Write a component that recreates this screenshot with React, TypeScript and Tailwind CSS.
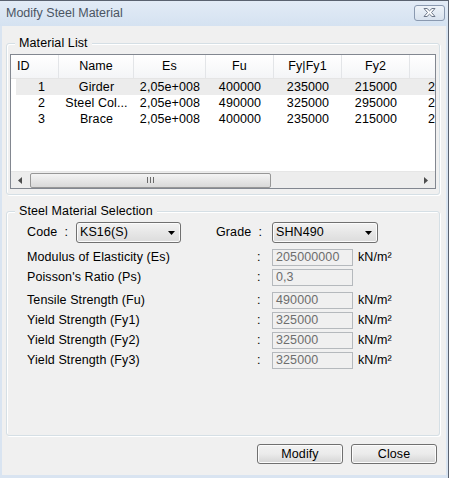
import React from "react";

const FONT = { fontFamily: '"Liberation Sans", Arial, sans-serif' };

const columns = [
  { title: "ID", w: 48 },
  { title: "Name", w: 75 },
  { title: "Es", w: 72 },
  { title: "Fu", w: 68 },
  { title: "Fy|Fy1", w: 68 },
  { title: "Fy2", w: 68 },
  { title: "Fy3", w: 74 },
];

const rows = [
  ["1", "Girder", "2,05e+008", "400000", "235000", "215000", "215000"],
  ["2", "Steel Col...", "2,05e+008", "490000", "325000", "295000", "295000"],
  ["3", "Brace", "2,05e+008", "400000", "235000", "215000", "215000"],
];

const props = [
  { label: "Modulus of Elasticity (Es)", value: "205000000", unit: true },
  { label: "Poisson's Ratio (Ps)", value: "0,3", unit: false },
  { label: "Tensile Strength (Fu)", value: "490000", unit: true, gap: true },
  { label: "Yield Strength (Fy1)", value: "325000", unit: true },
  { label: "Yield Strength (Fy2)", value: "325000", unit: true },
  { label: "Yield Strength (Fy3)", value: "325000", unit: true },
];

function DownArrow() {
  return (
    <svg width="7" height="4" viewBox="0 0 7 4">
      <path d="M0 0h7L3.5 4z" fill="#000" />
    </svg>
  );
}

function Combo({ value, width }: { value: string; width: string }) {
  return (
    <div
      className={`${width} h-[21px] flex items-center justify-between pl-[3px] pr-[5px] rounded-[3px] border border-[#707070] bg-gradient-to-b from-[#f2f2f2] to-[#dcdcdc] shadow-[inset_0_0_0_1px_#fbfbfb]`}
    >
      <span>{value}</span>
      <DownArrow />
    </div>
  );
}

function GroupBox({
  title,
  className,
  children,
}: {
  title: string;
  className: string;
  children: React.ReactNode;
}) {
  return (
    <div
      className={`relative border border-[#d5dfe5] rounded-[3px] shadow-[1px_1px_0_#ffffff,inset_1px_1px_0_#ffffff] ${className}`}
    >
      <span className="absolute left-[8px] top-[-8px] px-[4px] bg-[#f0f0f0] leading-[14px]">
        {title}
      </span>
      {children}
    </div>
  );
}

function Button({ label }: { label: string }) {
  return (
    <div className="w-[86px] h-[20px] flex items-center justify-center rounded-[3px] border border-[#707070] bg-gradient-to-b from-[#f2f2f2] via-[#ebebeb] to-[#d4d4d4] shadow-[inset_0_0_0_1px_#fcfcfc]">
      {label}
    </div>
  );
}

export default function App() {
  return (
    <div
      className="w-[449px] h-[478px] flex flex-col bg-[#d9e4f1] border-t border-r border-[#5a6270] text-[12.5px] tracking-[0.1px] text-black"
      style={FONT}
    >
      {/* Title bar */}
      <div className="h-[25px] flex items-center justify-between pl-[6px] pr-[3px] bg-gradient-to-b from-[#e2ebf6] to-[#d5e2f1]">
        <span className="text-[#4b5563] text-[12.5px] tracking-normal">Modify Steel Material</span>
        <div className="w-[31px] h-[16px] mt-[-2px] flex items-center justify-center rounded-[3px] border border-[#8a99b0] bg-gradient-to-b from-[#eef3f9] to-[#d8e2ee]">
          <svg width="13" height="9" viewBox="0 0 13 9">
            <path
              d="M1 0.5h3l2.5 2.3 2.5-2.3h3L8.5 4.5l3.5 4h-3L6.5 6.2 4 8.5H1l3.5-4z"
              fill="#ffffff"
              stroke="#6b7688"
              strokeWidth="1"
            />
          </svg>
        </div>
      </div>

      {/* Client area */}
      <div className="flex-1 ml-[2px] mr-[2px] mb-[3px] bg-[#f0f0f0] flex flex-col px-[4px]">
        <GroupBox title="Material List" className="mt-[17px] h-[152px] w-[434px] pl-[3px] pt-[10px]">
          <div className="w-[426px] h-[135px] border border-[#828790] bg-white flex flex-col overflow-hidden">
            {/* Header */}
            <div className="h-[24px] flex shrink-0 bg-gradient-to-b from-white to-[#f4f5f7] border-b border-[#e5e5e5]">
              {columns.map((c, i) => (
                <div
                  key={c.title}
                  style={{ width: c.w }}
                  className={`shrink-0 h-full flex items-center border-r border-[#e3e5e8] ${
                    i === 0 ? "pl-[6px]" : "justify-center"
                  }`}
                >
                  {c.title}
                </div>
              ))}
            </div>
            {/* Rows */}
            <div className="flex-1 flex flex-col">
              {rows.map((r, ri) => (
                <div key={ri} className="h-[16px] flex pl-[5px]">
                  <div className={`flex h-full ${ri === 0 ? "bg-[#ececec]" : ""}`}>
                    {r.map((cell, ci) => (
                      <div
                        key={ci}
                        style={{ width: ci === 0 ? columns[0].w - 5 : columns[ci].w }}
                        className={`shrink-0 h-full flex items-center whitespace-nowrap overflow-hidden ${
                          ci === 0 ? "justify-end pr-[14px]" : ci === 6 ? "pl-[18px]" : "justify-center"
                        }`}
                      >
                        {cell}
                      </div>
                    ))}
                  </div>
                </div>
              ))}
            </div>
            {/* Horizontal scrollbar */}
            <div className="h-[17px] shrink-0 flex items-center bg-[#ededed] border-t border-[#e6e6e6]">
              <div className="w-[18px] h-full flex items-center justify-center">
                <svg width="4" height="7" viewBox="0 0 4 7">
                  <path d="M4 0v7L0 3.5z" fill="#4d4d4d" />
                </svg>
              </div>
              <div className="w-[241px] h-[15px] ml-px flex items-center justify-center gap-[2px] rounded-[2px] border border-[#979797] bg-gradient-to-b from-[#f4f4f4] to-[#d9d9d9]">
                <span className="w-px h-[6px] bg-[#6a6a6a]" />
                <span className="w-px h-[6px] bg-[#6a6a6a]" />
                <span className="w-px h-[6px] bg-[#6a6a6a]" />
              </div>
              <div className="flex-1" />
              <div className="w-[18px] h-full flex items-center justify-center">
                <svg width="4" height="7" viewBox="0 0 4 7">
                  <path d="M0 0v7L4 3.5z" fill="#4d4d4d" />
                </svg>
              </div>
            </div>
          </div>
        </GroupBox>

        <GroupBox title="Steel Material Selection" className="mt-[16px] h-[225px] w-[434px] pl-[20px] pt-[10px]">
          <div className="flex items-center h-[21px]">
            <span className="w-[49px]">Code&nbsp;&nbsp;:</span>
            <Combo value="KS16(S)" width="w-[105px]" />
            <span className="ml-[35px] w-[56px]">Grade&nbsp;&nbsp;:</span>
            <Combo value="SHN490" width="w-[106px]" />
          </div>
          <div className="mt-[4px] flex flex-col">
            {props.map((p) => (
              <div key={p.label} className={`h-[20px] flex items-center ${p.gap ? "mt-[3px]" : ""}`}>
                <span className="w-[230px]">{p.label}</span>
                <span className="w-[15px]">:</span>
                <div className="w-[81px] h-[17px] flex items-center pl-[3px] border border-[#b5b9bd] bg-[#f0f0f0] text-[#6d6d6d]">
                  {p.value}
                </div>
                {p.unit && <span className="ml-[5px]">kN/m²</span>}
              </div>
            ))}
          </div>
        </GroupBox>

        <div className="mt-[8px] flex justify-end gap-[8px] pr-[5px]">
          <Button label="Modify" />
          <Button label="Close" />
        </div>
      </div>
    </div>
  );
}
